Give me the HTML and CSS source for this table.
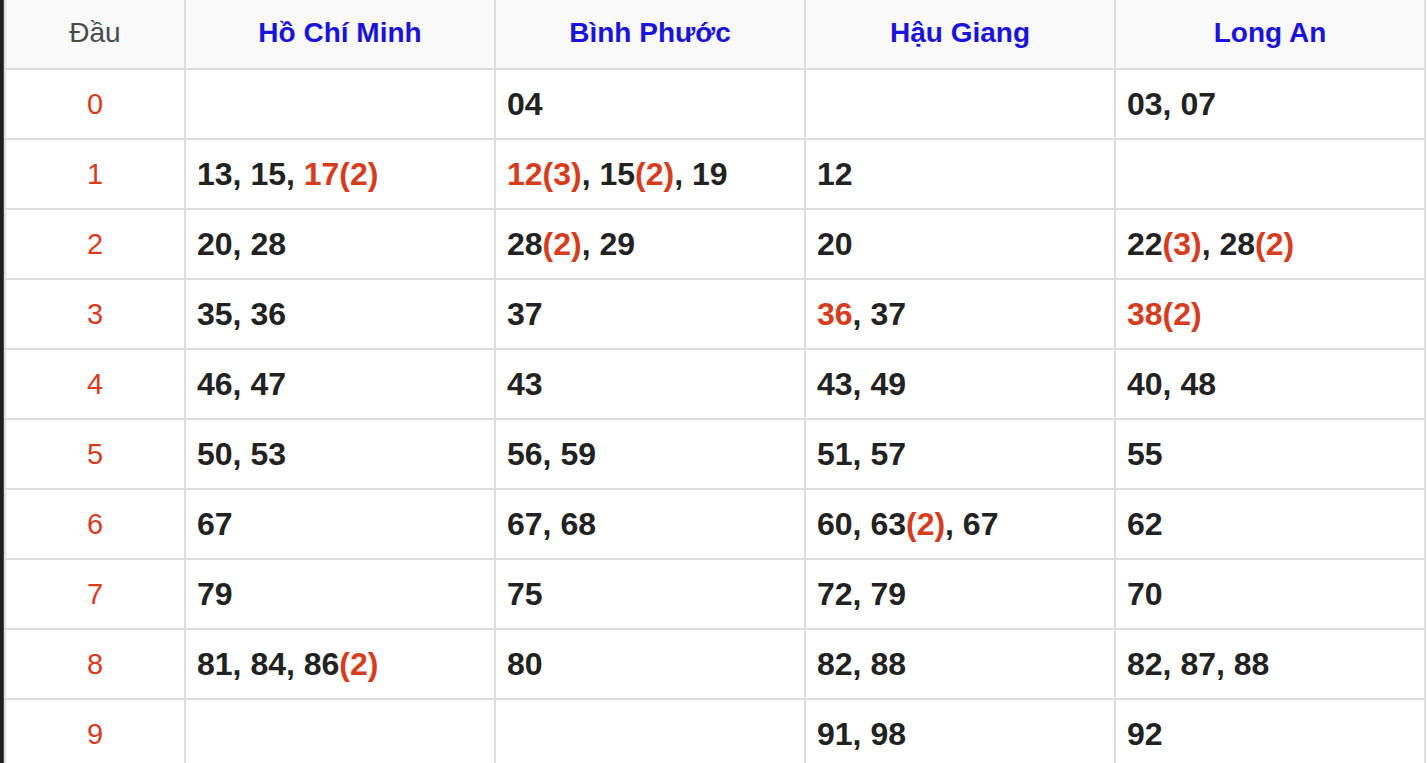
FILE: index.html
```html
<!DOCTYPE html>
<html lang="vi">
<head>
<meta charset="utf-8">
<title>Thống kê đầu</title>
<link rel="stylesheet" href="styles.css">
</head>
<body>
<div class="page">
  <div class="edge"></div>
  <table class="loto">
    <colgroup>
      <col class="c-head">
      <col class="c-prov">
      <col class="c-prov">
      <col class="c-prov">
      <col class="c-prov">
    </colgroup>
    <thead>
      <tr>
        <th class="dau">Đầu</th>
        <th>Hồ Chí Minh</th>
        <th>Bình Phước</th>
        <th>Hậu Giang</th>
        <th>Long An</th>
      </tr>
    </thead>
    <tbody>
      <tr><td class="dau">0</td><td></td><td>04</td><td></td><td>03, 07</td></tr>
      <tr><td class="dau">1</td><td>13, 15, <span class="hot">17(2)</span></td><td><span class="hot">12(3)</span>, 15<span class="hot">(2)</span>, 19</td><td>12</td><td></td></tr>
      <tr><td class="dau">2</td><td>20, 28</td><td>28<span class="hot">(2)</span>, 29</td><td>20</td><td>22<span class="hot">(3)</span>, 28<span class="hot">(2)</span></td></tr>
      <tr><td class="dau">3</td><td>35, 36</td><td>37</td><td><span class="hot">36</span>, 37</td><td><span class="hot">38(2)</span></td></tr>
      <tr><td class="dau">4</td><td>46, 47</td><td>43</td><td>43, 49</td><td>40, 48</td></tr>
      <tr><td class="dau">5</td><td>50, 53</td><td>56, 59</td><td>51, 57</td><td>55</td></tr>
      <tr><td class="dau">6</td><td>67</td><td>67, 68</td><td>60, 63<span class="hot">(2)</span>, 67</td><td>62</td></tr>
      <tr><td class="dau">7</td><td>79</td><td>75</td><td>72, 79</td><td>70</td></tr>
      <tr><td class="dau">8</td><td>81, 84, 86<span class="hot">(2)</span></td><td>80</td><td>82, 88</td><td>82, 87, 88</td></tr>
      <tr><td class="dau">9</td><td></td><td></td><td>91, 98</td><td>92</td></tr>
    </tbody>
  </table>
</div>
</body>
</html>
```
FILE: styles.css
```css
html, body {
  margin: 0;
  padding: 0;
  background: #ffffff;
}
.page {
  display: flex;
  align-items: flex-start;
  font-family: "Liberation Sans", Arial, Helvetica, sans-serif;
}
.edge {
  width: 4px;
  flex: 0 0 4px;
  align-self: stretch;
  min-height: 763px;
  background: #1e1e1e;
  border-right: 1px solid #4a4a4a;
  box-sizing: border-box;
}
.loto {
  border-collapse: collapse;
  table-layout: fixed;
  width: 1421px;
  border-right: 2px solid #dddddd;
  border-left: 2px solid #dddddd;
}
.c-head { width: 180px; }
.c-prov { width: 310px; }
.loto th,
.loto td {
  border: 2px solid #dddddd;
  padding: 0 11px;
  vertical-align: middle;
}
.loto thead tr:first-child th {
  border-top: none;
}
.loto th {
  height: 69px;
  box-sizing: border-box;
  background: #f9f9f9;
  color: #1a14d8;
  font-size: 28px;
  font-weight: bold;
  text-align: center;
  padding-bottom: 2px;
}
.loto th.dau {
  color: #4a4a4a;
  font-weight: normal;
}
.loto td {
  height: 68px;
  color: #222222;
  font-size: 32px;
  font-weight: bold;
  text-align: left;
  white-space: nowrap;
}
.loto td.dau {
  color: #d63c1e;
  font-weight: normal;
  text-align: center;
  font-size: 29px;
}
.hot {
  color: #d63c1e;
}
```
